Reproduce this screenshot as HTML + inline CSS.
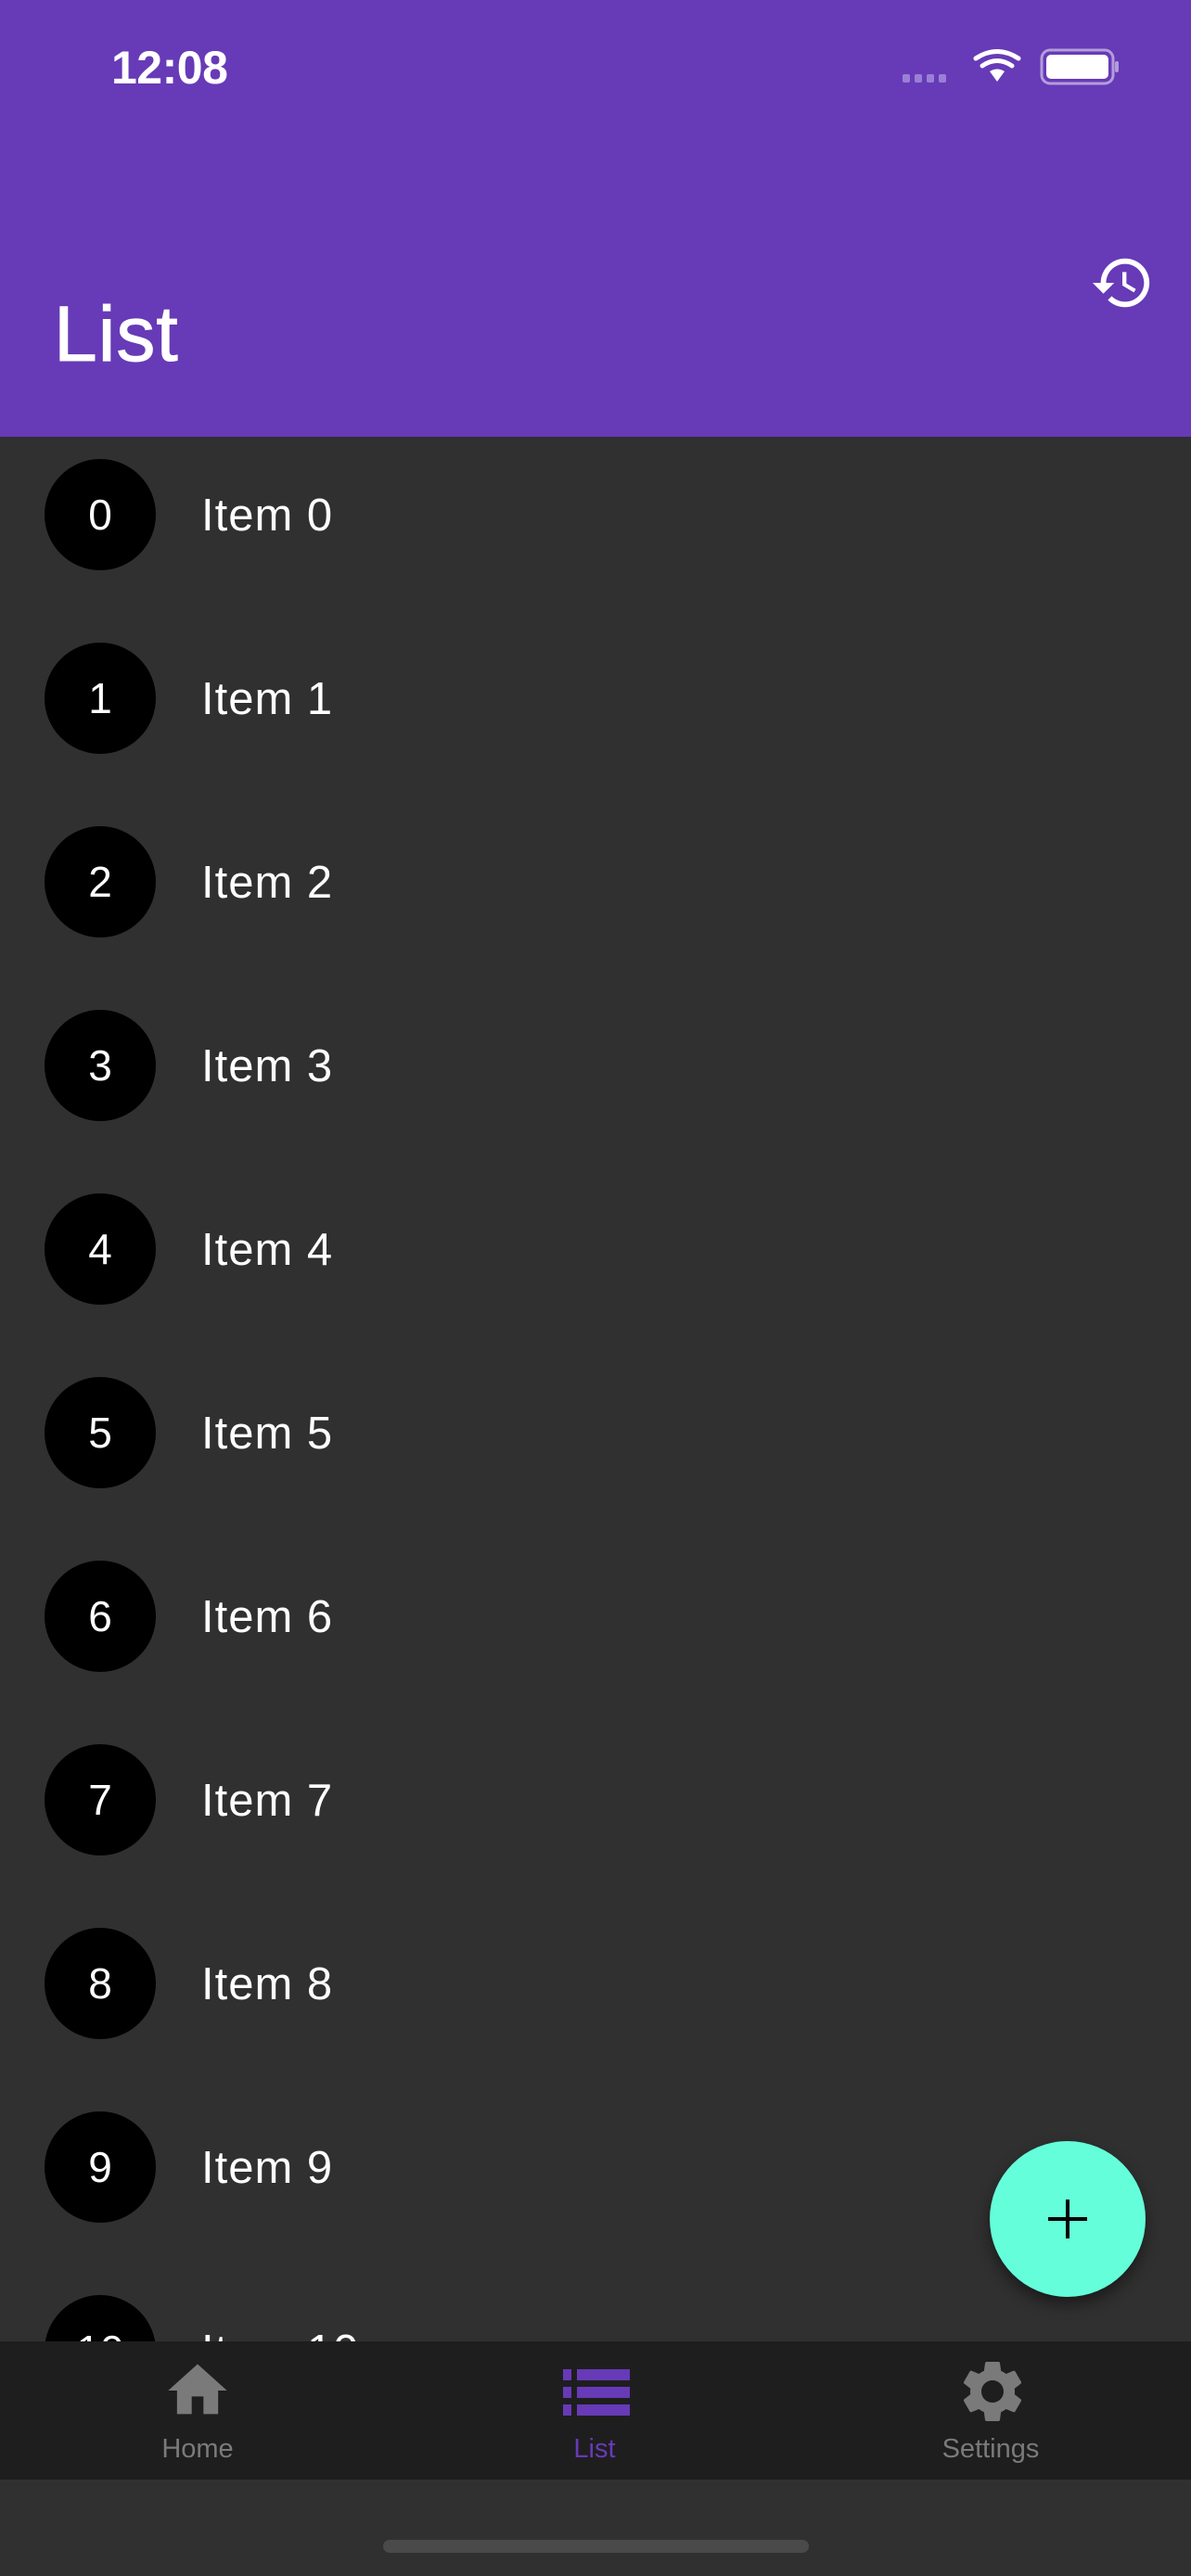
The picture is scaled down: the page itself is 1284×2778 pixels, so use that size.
<!DOCTYPE html>
<html><head><meta charset="utf-8"><style>
*{margin:0;padding:0;box-sizing:border-box}
body{width:1284px;height:2778px;background:#303030;font-family:"Liberation Sans",sans-serif;position:relative;overflow:hidden;color:#fff}
.hdr{position:absolute;left:0;top:0;width:1284px;height:471px;background:#673AB7}
.time{position:absolute;left:120px;top:44px;font-size:50px;font-weight:bold;letter-spacing:-0.5px}
.title{position:absolute;left:58px;top:318px;font-size:84px;line-height:1;letter-spacing:1px;-webkit-text-stroke:1px #fff}
.row{position:absolute;left:0;width:1284px;height:198px}
.circ{position:absolute;left:48px;top:0;width:120px;height:120px;border-radius:60px;background:#000;font-size:46px;line-height:120px;text-align:center}
.lbl{position:absolute;left:217px;top:0;line-height:122px;font-size:49px;letter-spacing:1px}
.nav{position:absolute;left:0;top:2525px;width:1284px;height:149px;background:#1e1e1e}
.nl{position:absolute;top:100px;font-size:29px;width:200px;text-align:center;color:#7a7a7a}
.fab{position:absolute;left:1067px;top:2309px;width:168px;height:168px;border-radius:84px;background:#64FFDA;box-shadow:0 8px 16px rgba(0,0,0,.45)}
</style></head><body>
<div class="hdr">
<div class="time">12:08</div>
<svg style="position:absolute;left:970px;top:50px" width="240" height="45" viewBox="0 0 240 45">
<g fill="#9a7fd6"><rect x="3" y="30" width="8" height="9" rx="2"/><rect x="16" y="30" width="8" height="9" rx="2"/><rect x="29" y="30" width="8" height="9" rx="2"/><rect x="42" y="30" width="8" height="9" rx="2"/></g>
<g fill="none" stroke="#fff" stroke-width="5" stroke-linecap="round"><path d="M82 13 Q105 -2 128 13"/><path d="M89 21 Q105 10 121 21"/></g>
<path d="M97 27 Q105 22 113 27 L105 38 Z" fill="#fff"/>
<rect x="153" y="4" width="77" height="36" rx="9" fill="none" stroke="#b39ddb" stroke-width="3"/>
<rect x="158" y="9" width="67" height="26" rx="5" fill="#fff"/>
<rect x="232" y="16" width="4" height="12" rx="2" fill="#b39ddb"/>
</svg>
<svg style="position:absolute;left:1175px;top:270px" width="70" height="70" viewBox="0 0 24 24"><path fill="#fff" d="M13 3a9 9 0 0 0-9 9H1l3.89 3.89.07.14L9 12H6c0-3.870 3.13-7 7-7s7 3.13 7 7-3.13 7-7 7c-1.93 0-3.680-.79-4.94-2.06l-1.42 1.42A8.95 8.95 0 0 0 13 21a9 9 0 0 0 0-18zm-1 5v5l4.28 2.54.72-1.21-3.5-2.08V8H12z"/></svg>
<div class="title">List</div>
</div>
<div class="row" style="top:495px"><div class="circ">0</div><div class="lbl">Item 0</div></div>
<div class="row" style="top:693px"><div class="circ">1</div><div class="lbl">Item 1</div></div>
<div class="row" style="top:891px"><div class="circ">2</div><div class="lbl">Item 2</div></div>
<div class="row" style="top:1089px"><div class="circ">3</div><div class="lbl">Item 3</div></div>
<div class="row" style="top:1287px"><div class="circ">4</div><div class="lbl">Item 4</div></div>
<div class="row" style="top:1485px"><div class="circ">5</div><div class="lbl">Item 5</div></div>
<div class="row" style="top:1683px"><div class="circ">6</div><div class="lbl">Item 6</div></div>
<div class="row" style="top:1881px"><div class="circ">7</div><div class="lbl">Item 7</div></div>
<div class="row" style="top:2079px"><div class="circ">8</div><div class="lbl">Item 8</div></div>
<div class="row" style="top:2277px"><div class="circ">9</div><div class="lbl">Item 9</div></div>
<div class="row" style="top:2475px"><div class="circ">10</div><div class="lbl">Item 10</div></div>
<div class="fab"><svg style="position:absolute;left:59px;top:59px" width="50" height="50" viewBox="0 0 50 50"><path d="M25 4v42M4 25h42" stroke="#000" stroke-width="4"/></svg></div>
<div class="nav">
<svg style="position:absolute;left:175px;top:15px" width="76" height="76" viewBox="0 0 24 24"><path fill="#7a7a7a" d="M10 20v-6h4v6h5v-8h3L12 3 2 12h3v8z"/></svg>
<svg style="position:absolute;left:604px;top:20px" width="76" height="70" viewBox="0 0 76 70"><g fill="#673AB7"><rect x="3" y="10" width="9" height="12"/><rect x="18" y="10" width="57" height="12"/><rect x="3" y="29" width="9" height="12"/><rect x="18" y="29" width="57" height="12"/><rect x="3" y="48" width="9" height="12"/><rect x="18" y="48" width="57" height="12"/></g></svg>
<svg style="position:absolute;left:1030px;top:14px" width="80" height="80" viewBox="0 0 24 24"><path fill="#7a7a7a" d="M19.14 12.94c.04-.3.06-.61.06-.94 0-.32-.02-.64-.07-.94l2.030-1.58a.49.49 0 0 0 .12-.61l-1.92-3.320a.488.488 0 0 0-.59-.22l-2.39.96c-.5-.38-1.03-.7-1.62-.94l-.36-2.54a.484.484 0 0 0-.48-.41h-3.84c-.24 0-.43.17-.47.41l-.36 2.54c-.59.24-1.130.57-1.62.94l-2.39-.96c-.22-.08-.47 0-.59.22L2.74 8.87c-.12.21-.08.47.12.61l2.03 1.58c-.05.3-.09.63-.09.94s.02.64.07.94l-2.03 1.58a.49.49 0 0 0-.12.61l1.92 3.32c.12.22.37.29.59.22l2.39-.96c.5.38 1.03.7 1.62.94l.36 2.54c.05.24.24.41.48.41h3.84c.24 0 .44-.17.47-.41l.36-2.54c.59-.24 1.13-.56 1.62-.94l2.39.96c.22.08.47 0 .59-.22l1.92-3.32c.12-.22.07-.47-.12-.61l-2.01-1.58zM12 15.6c-1.98 0-3.6-1.62-3.6-3.6s1.62-3.6 3.6-3.6 3.6 1.62 3.6 3.6-1.62 3.6-3.6 3.6z"/></svg>
<div class="nl" style="left:113px">Home</div>
<div class="nl" style="left:541px;color:#673AB7">List</div>
<div class="nl" style="left:968px">Settings</div>
</div>
<div style="position:absolute;left:413px;top:2739px;width:459px;height:14px;border-radius:7px;background:#4a4a4a"></div>
</body></html>
